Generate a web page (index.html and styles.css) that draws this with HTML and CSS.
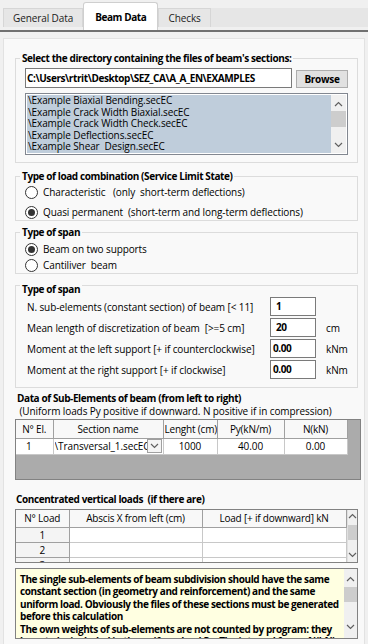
FILE: index.html
```html
<!DOCTYPE html>
<html lang="en">
<head>
    <meta charset="UTF-8">
    <meta name="viewport" content="width=device-width, initial-scale=1.0">
    <title>Beam Data</title>
    <link rel="stylesheet" href="styles.css">
</head>
<body>
    <div class="tabs">
        <div class="tab">General Data</div>
        <div class="tab active">Beam Data</div>
        <div class="tab">Checks</div>
        <div class="tab-fill"></div>
    </div>

    <div class="page">
        <div class="group group-dir">
            <div class="group-title">Select the directory containing the files of beam's sections:</div>
            <div class="dir-row">
                <div class="textbox path">C:\Users\rtrit\Desktop\SEZ_CA\A_A_EN\EXAMPLES</div>
                <button class="btn">Browse</button>
            </div>
            <div class="listbox">
                <div class="list-items">
                    <div>\Example Biaxial Bending.secEC</div>
                    <div>\Example Crack Width Biaxial.secEC</div>
                    <div>\Example Crack Width Check.secEC</div>
                    <div>\Example Deflections.secEC</div>
                    <div>\Example Shear&nbsp; Design.secEC</div>
                </div>
                <div class="vscroll list-scroll">
                    <svg class="arrow" width="9" height="6" viewBox="0 0 9 6"><path d="M1 5 L4.5 1.5 L8 5" /></svg>
                    <div class="thumb"></div>
                    <div class="track"></div>
                    <svg class="arrow" width="9" height="6" viewBox="0 0 9 6"><path d="M1 1 L4.5 4.5 L8 1" /></svg>
                </div>
            </div>
        </div>

        <div class="group group-comb">
            <div class="group-title">Type of load combination (Service Limit State)</div>
            <div class="radio-list spaced">
                <div class="radio"><span class="dot"></span>Characteristic&nbsp;&nbsp; (only&nbsp; short-term deflections)</div>
                <div class="radio"><span class="dot on"></span>Quasi permanent&nbsp; (short-term and long-term deflections)</div>
            </div>
        </div>

        <div class="group group-span">
            <div class="group-title">Type of span</div>
            <div class="radio-list">
                <div class="radio"><span class="dot on"></span>Beam on two supports</div>
                <div class="radio"><span class="dot"></span>Cantiliver&nbsp; beam</div>
            </div>
        </div>

        <div class="group group-params">
            <div class="group-title">Type of span</div>
            <div class="param">
                <span>N. sub-elements (constant section) of beam [&lt; 11]</span>
                <div class="textbox num">1</div>
                <span></span>
            </div>
            <div class="param">
                <span>Mean length of discretization of beam&nbsp; [&gt;=5 cm]</span>
                <div class="textbox num">20</div>
                <span>cm</span>
            </div>
            <div class="param">
                <span>Moment at the left support [+ if counterclockwise]</span>
                <div class="textbox num tight">0.00</div>
                <span>kNm</span>
            </div>
            <div class="param">
                <span>Moment at the right support [+ if clockwise]</span>
                <div class="textbox num tight">0.00</div>
                <span>kNm</span>
            </div>
        </div>

        <div class="caption">
            <div class="bold">Data of Sub-Elements of beam (from left to right)</div>
            <div>&nbsp;(Uniform loads Py positive if downward. N positive if in compression)</div>
        </div>
        <div class="grid grid-elements">
            <table>
                <colgroup>
                    <col style="width: 37px">
                    <col style="width: 110px">
                    <col style="width: 54px">
                    <col style="width: 67px">
                    <col style="width: 63px">
                </colgroup>
                <tr class="head">
                    <th>N° El.</th>
                    <th>Section name</th>
                    <th>Lenght (cm)</th>
                    <th>Py(kN/m)</th>
                    <th>N(kN)</th>
                </tr>
                <tr>
                    <td class="left">1</td>
                    <td>
                        <div class="combo">
                            <span>\Transversal_1.secEC</span>
                            <span class="combo-btn"><svg width="9" height="6" viewBox="0 0 9 6"><path d="M1 1 L4.5 4.5 L8 1" /></svg></span>
                        </div>
                    </td>
                    <td>1000</td>
                    <td>40.00</td>
                    <td>0.00</td>
                </tr>
            </table>
        </div>

        <div class="caption caption-loads bold">Concentrated vertical loads&nbsp; (if there are)</div>
        <div class="grid grid-loads">
            <table>
                <colgroup>
                    <col style="width: 53px">
                    <col style="width: 133px">
                    <col style="width: 144px">
                </colgroup>
                <tr class="head">
                    <th>N° Load</th>
                    <th>Abscis X from left (cm)</th>
                    <th>Load [+ if downward] kN</th>
                </tr>
                <tr><td class="rowhead">1</td><td></td><td></td></tr>
                <tr><td class="rowhead">2</td><td></td><td></td></tr>
                <tr><td class="rowhead">3</td><td></td><td></td></tr>
            </table>
            <div class="vscroll grid-scroll">
                <svg class="arrow" width="9" height="6" viewBox="0 0 9 6"><path d="M1 5 L4.5 1.5 L8 5" /></svg>
                <div class="thumb"></div>
                <div class="track"></div>
                <svg class="arrow" width="9" height="6" viewBox="0 0 9 6"><path d="M1 1 L4.5 4.5 L8 1" /></svg>
            </div>
        </div>

        <div class="note">
            <div class="note-text">
                The single sub-elements of beam subdivision should have the same<br>
                constant section (in geometry and reinforcement) and the same<br>
                uniform load. Obviously the files of these sections must be generated<br>
                before this calculation<br>
                The own weights of sub-elements are not counted by program: they<br>
                have to be included in the uniform load Py. The internal forces N(kN)
            </div>
            <div class="vscroll note-scroll">
                <svg class="arrow" width="9" height="6" viewBox="0 0 9 6"><path d="M1 5 L4.5 1.5 L8 5" /></svg>
                <div class="thumb"></div>
                <div class="track"></div>
                <svg class="arrow" width="9" height="6" viewBox="0 0 9 6"><path d="M1 1 L4.5 4.5 L8 1" /></svg>
            </div>
        </div>
    </div>
</body>
</html>
```

FILE: styles.css
```css
* {
    box-sizing: border-box;
}

body {
    margin: 0;
    width: 368px;
    height: 644px;
    overflow: hidden;
    background: #f0f0f0;
    font-family: "Open Sans", "Noto Sans", sans-serif;
    font-size: 10px;
    letter-spacing: -0.1px;
    color: #000;
}

.bold {
    font-weight: bold;
    letter-spacing: -0.4px;
}

/* tab strip */
.tabs {
    display: flex;
    align-items: flex-end;
    height: 32px;
    padding-left: 3px;
    border-bottom: 2px solid #707070;
}

.tab {
    display: flex;
    align-items: center;
    height: 19px;
    margin-bottom: 3px;
    padding: 0 9px;
    background: #e6e6e6;
    border: 1px solid #d6d6d6;
    border-bottom: none;
    color: #1a1a1a;
}

.tab.active {
    height: 28px;
    margin-bottom: 0;
    padding: 0 11px;
    background: #fff;
    border-color: #cfcfcf;
    border-radius: 3px 3px 0 0;
    font-weight: bold;
    letter-spacing: -0.4px;
    color: #000;
}

.tab:last-of-type {
    padding-right: 28px;
}

.tab-fill {
    flex: 1;
    height: 19px;
    margin-bottom: 3px;
    background: #e6e6e6;
}

/* page */
.page {
    margin: 6px 3px 0;
    height: 606px;
    padding: 19px 6px 0 11px;
    background: #f9f9f9;
    border: 1px solid #e2e2e2;
    border-bottom: none;
}

.group {
    border: 1px solid #dcdcdc;
    padding: 0 9px 0 9px;
}

.group-title {
    display: table;
    margin: -8px 0 0 -5px;
    padding: 0 2px;
    line-height: 14px;
    font-weight: bold;
    letter-spacing: -0.4px;
    background: #f9f9f9;
}

.group-dir {
    padding-bottom: 7px;
}

.group-comb {
    margin-top: 13px;
}

.group-span {
    margin-top: 11px;
}

.group-params {
    margin-top: 11px;
    padding-top: 4px;
    padding-bottom: 7px;
}

/* directory row */
.dir-row {
    display: flex;
    gap: 4px;
    margin-top: 3px;
}

.textbox {
    height: 20px;
    border: 1px solid #7a7a7a;
    background: #fff;
    padding: 0 4px;
    line-height: 18px;
    font-weight: bold;
    letter-spacing: -0.4px;
    white-space: nowrap;
    overflow: hidden;
}

.path {
    flex: 1;
    padding-left: 1px;
}

.btn {
    width: 52px;
    height: 18px;
    margin-top: 2px;
    padding: 0;
    background: #e1e1e1;
    border: 1px solid #adadad;
    font-family: inherit;
    font-size: 10px;
    font-weight: bold;
    letter-spacing: -0.3px;
    color: #000;
}

.listbox {
    display: flex;
    height: 62px;
    margin-top: 5px;
    padding: 1px;
    background: #fff;
    border: 1px solid #828790;
}

.list-items {
    flex: 1;
    padding-left: 1px;
    background: #bfcddb;
    line-height: 11.6px;
    white-space: nowrap;
    overflow: hidden;
}

/* scrollbars */
.vscroll {
    display: flex;
    flex-direction: column;
    align-items: center;
    background: #f0f0f0;
}

.vscroll .arrow {
    flex: none;
}

.vscroll path,
.combo-btn path {
    fill: none;
    stroke: #606060;
    stroke-width: 1.2;
}

.vscroll .thumb {
    width: 100%;
    background: #cdcdcd;
}

.vscroll .track {
    flex: 1;
}

.list-scroll {
    width: 15px;
    padding: 6px 0 5px;
}

.list-scroll .thumb {
    height: 16px;
    margin-top: 4px;
}

/* radios */
.radio-list {
    display: flex;
    flex-direction: column;
    padding-top: 1px;
}

.radio-list.spaced {
    gap: 4px;
}

.group-span .radio-list {
    padding-top: 2px;
}

.radio {
    display: flex;
    align-items: center;
    height: 16px;
    white-space: nowrap;
}

.dot {
    width: 13px;
    height: 13px;
    margin-right: 5px;
    border: 1px solid #333;
    border-radius: 50%;
    background: #fff;
    display: flex;
    align-items: center;
    justify-content: center;
}

.dot.on::after {
    content: "";
    width: 7px;
    height: 7px;
    border-radius: 50%;
    background: #333;
}

/* numeric parameters */
.param {
    display: grid;
    grid-template-columns: 233px 46px auto;
    column-gap: 10px;
    align-items: center;
    height: 21px;
    padding-left: 2px;
    white-space: nowrap;
}

.textbox.num {
    height: 19px;
    line-height: 17px;
    padding-left: 5px;
}

.textbox.num.tight {
    padding-left: 2px;
}

/* grids */
.caption {
    margin-top: 4px;
    padding-left: 2px;
    line-height: 12.5px;
    white-space: nowrap;
}

.caption-loads {
    margin-top: 13px;
    padding-left: 1px;
}

.grid {
    border: 1px solid #828282;
    overflow: hidden;
}

.grid table {
    border-collapse: collapse;
    table-layout: fixed;
    background: #fff;
}

.grid th,
.grid td {
    border: 1px solid #c8c8c8;
    padding: 0 1px;
    font-weight: normal;
    text-align: center;
    white-space: nowrap;
    overflow: hidden;
}

.grid tr:first-child th {
    border-top: none;
}

.grid th:first-child,
.grid td:first-child {
    border-left: none;
}

.grid .head th {
    height: 18px;
    background: #f8f8f8;
    border-color: #a0a0a0;
    letter-spacing: -0.2px;
}

.grid td {
    height: 16px;
}

.grid-elements {
    height: 61px;
    margin-top: 2px;
    margin-right: -3px;
    background: #ababab;
}

.grid-elements table {
    width: 331px;
}

.grid-elements td.left {
    text-align: left;
    padding-left: 10px;
}

.grid-elements td:nth-child(2) {
    padding: 0 1px;
}

.combo {
    display: flex;
    align-items: center;
    justify-content: space-between;
    height: 15px;
    text-align: left;
    overflow: hidden;
}

.combo span:first-child {
    overflow: hidden;
    flex: 1;
}

.combo-btn {
    flex: none;
    width: 15px;
    height: 14px;
    border: 1px solid #a0a0a0;
    background: #f4f4f4;
    display: flex;
    align-items: center;
    justify-content: center;
}

.grid-loads {
    display: flex;
    height: 54px;
    margin-top: 3px;
    background: #fff;
}

.grid-loads table {
    width: 330px;
}

.grid-loads td {
    height: 15px;
}

.grid-loads td.rowhead {
    background: #f4f4f4;
    border-color: #a0a0a0;
}

.grid-scroll {
    width: 13px;
    padding: 3px 0 4px;
    border-left: 1px solid #e0e0e0;
}

.grid-scroll .thumb {
    height: 15px;
    margin-top: 6px;
}

/* note */
.note {
    display: flex;
    height: 71px;
    margin-top: 5px;
    background: #ffffe1;
    border: 1px solid #828282;
    overflow: hidden;
}

.note-text {
    flex: 1;
    padding: 4px 0 0 4px;
    line-height: 12.5px;
    font-weight: bold;
    letter-spacing: -0.4px;
    white-space: nowrap;
    overflow: hidden;
}

.note-scroll {
    width: 13px;
    padding: 7px 0 8px;
    background: #f0f0f0;
}

.note-scroll .thumb {
    height: 15px;
    margin-top: 5px;
}
```
